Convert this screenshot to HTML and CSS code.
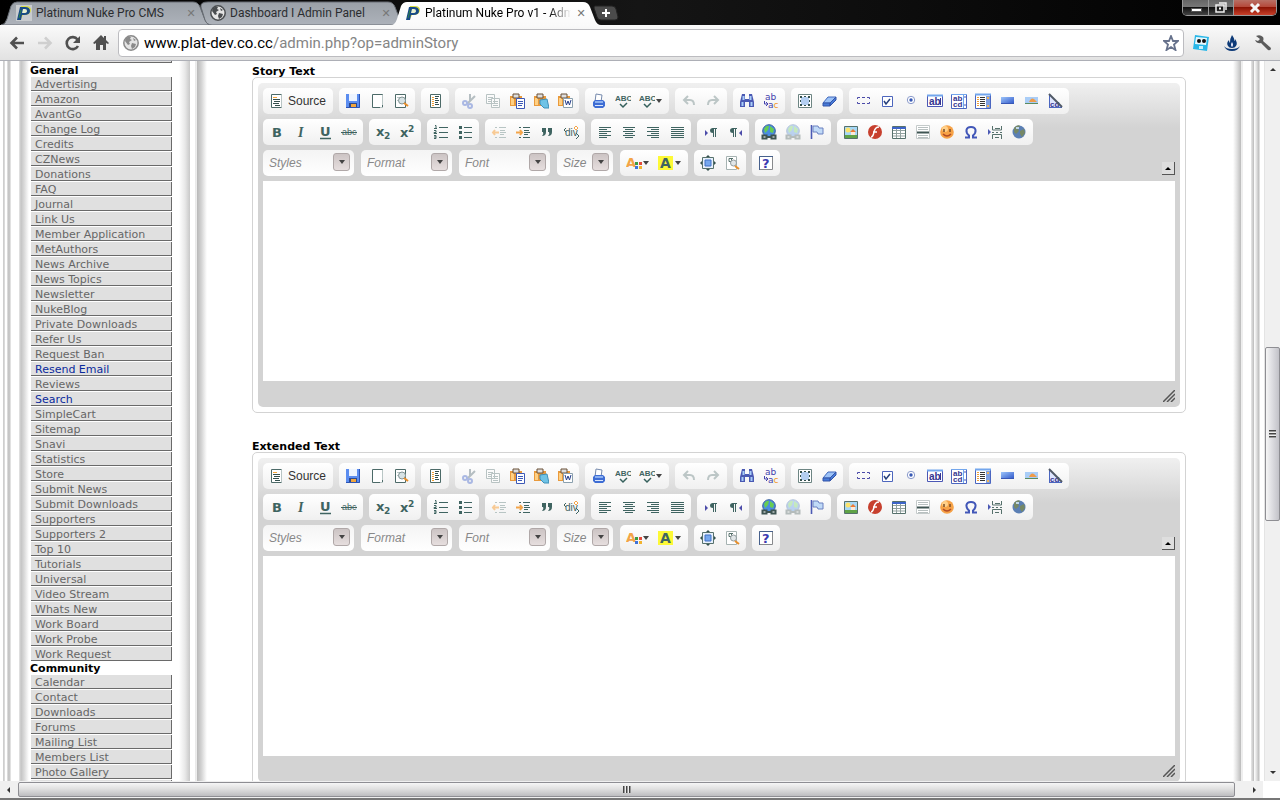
FILE: index.html
```html
<!DOCTYPE html>
<html lang="en">
<head>
<meta charset="utf-8">
<title>Platinum Nuke Pro v1 - Administration</title>
<link rel="stylesheet" href="styles.css">
</head>
<body>
<svg class="defs" aria-hidden="true">
  <defs>
    <linearGradient id="tabIdle" x2="0" y2="1"><stop offset="0" stop-color="#9aa0a7"/><stop offset="1" stop-color="#adb2ba"/></linearGradient>
    <linearGradient id="tabOn" x2="0" y2="1"><stop offset="0" stop-color="#fff"/><stop offset="1" stop-color="#fafafa"/></linearGradient>
    <linearGradient id="blueBtn" x2="1" y2="1"><stop offset="0" stop-color="#9cc4fa"/><stop offset="1" stop-color="#2d55c8"/></linearGradient>
  </defs>
  <symbol id="nuke" viewBox="0 0 16 16"><path d="M5 1h5q5 0 5 4t-5 5H7l-2 4H3z" fill="#d7dc45"/><path d="M4 2h5q5 0 5 4t-6 4H6l-1 5H1z" fill="#174a86"/><path d="M7 4h2q2 0 2 2t-3 2H6z" fill="#e8efcf"/><path d="M5 5 3 13" stroke="#2c8049"/></symbol>
  <symbol id="globe" viewBox="0 0 16 16"><circle cx="8" cy="8" r="7.200" fill="#e4e4e4" stroke="currentColor" stroke-width="1.500"/><path d="M3 3q3-2 5-1l-1 2 2 1-3 2 1 2-2 1-3-4zM9 8l4 1-1 3-3 2-1-3zM10 3l3 2-2 1z" fill="currentColor"/></symbol>
  <symbol id="back" viewBox="0 0 16 16"><path d="M8 2.500 2.500 8 8 13.500M3 8h12" fill="none" stroke="currentColor" stroke-width="2.600"/></symbol>
  <symbol id="forward" viewBox="0 0 16 16"><path d="M8 2.500 13.500 8 8 13.500M13 8H1" fill="none" stroke="currentColor" stroke-width="2.600"/></symbol>
  <symbol id="reload" viewBox="0 0 16 16"><path d="M12.500 4.500A6 6 0 1 0 13 11" fill="none" stroke="currentColor" stroke-width="2.600"/><path d="M15 1v7H8z" fill="currentColor"/></symbol>
  <symbol id="home" viewBox="0 0 16 16"><path d="M8 0 0 8l1.500 1L3 8v7h4v-5h3v5h3V8l2 1 1-1-3-3V1h-2v2z" fill="currentColor"/></symbol>
  <symbol id="star" viewBox="0 0 16 16"><path d="m8 1 2 5h5l-4 3.500 1.500 5.500L8 12l-4.500 3L5 9.500 1 6h5z" fill="#fff" stroke="#67728c" stroke-width="1.800"/></symbol>
  <symbol id="robot" viewBox="0 0 16 16"><path d="M2 0 16 2l-2 14-14-2z" fill="#28b7e8"/><path d="m3 2 11 1-1 7-11-1z" fill="#e8f8fd"/><circle cx="6" cy="6" r="2" fill="#111"/><circle cx="11" cy="6" r="2" fill="#111"/><path d="M6 11h4v3H6z" fill="#c9f0fc"/></symbol>
  <symbol id="flame" viewBox="0 0 16 16"><path d="M8 0q3 4 2 6 1 0 1-2 3 4 1 7-1 2-4 2t-4-2q-2-3 1-6 0 2 1 3 0-5 2-8z" fill="#0d3a78"/><path d="M8 7q-2 3 0 5 2-2 0-5z" fill="#eef"/><path d="M0 11q2 3 8 3t8-3q-2 5-8 5t-8-5z" fill="#0d3a78"/></symbol>
  <symbol id="wrench" viewBox="0 0 16 16"><path d="M1 1q4-2 7 1 1 2 0 4l8 7q0 3-3 2L6 8Q2 9 0 5l3 1 2-2z" fill="#5c5c5c"/></symbol>
  <symbol id="caret" viewBox="0 0 8 4"><path d="M1 0h6L4 4z" fill="#444"/></symbol>
</svg>

<template id="icons"><svg>
  <symbol id="i-source"><path d="M2.500 1.500h10v13h-10z" fill="#fff" stroke="#4c6a68"/><path d="M12.500 1.500v13" stroke="#b8c4c4"/><path d="M4 4.500h4" stroke="#f5a63a"/><path d="M4 6.500h7M5 8.500h6M4 10.500h6M6 12.500h5" stroke="#35504e"/></symbol>
  <symbol id="i-save"><path d="M1 1h14v14H1z" fill="#5b8df0"/><path d="M4 1h8v7H4z" fill="#edf4ff"/><path d="M4 10h8v5H4z" fill="#2d4a8f"/><path d="M6 11h5v4H6z" fill="#f1a63e"/><path d="M14.500 1v13.500H1" fill="none" stroke="#2c54b4"/></symbol>
  <symbol id="i-page"><path d="M3.500 1.500h10v13h-10z" fill="#fff" stroke="#4c6a68"/><path d="M13.500 2v10M14 14.500h-3" stroke="#b9c6c5" fill="none"/></symbol>
  <symbol id="i-preview"><path d="M2.500 1.500h10v13h-10z" fill="#fff" stroke="#4c6a68"/><path d="M4 4.500h4M4 7.500h2" stroke="#b9c6c5"/><circle cx="9" cy="7.500" r="3.500" fill="#d7e2e4" stroke="#819293"/><path d="m11 10 4 3" stroke="#e98f2b" stroke-width="2"/></symbol>
  <symbol id="i-template"><path d="M3.500 1.500h10v13h-10z" fill="#fff" stroke="#4c6a68"/><path d="M5 4.500h2M5 6.500h2M5 8.500h2M5 10.500h2M5 12.500h2" stroke="#f2a036"/><path d="M8 3.500h4M8 5.500h3M8 7.500h4M8 9.500h3M8 11.500h4" stroke="#35504e"/></symbol>
  <symbol id="i-cut"><path d="M9 1v7M14 3 6 11" stroke="#b5bec2" stroke-width="2"/><circle cx="4" cy="10" r="2" fill="none" stroke="#aab8e3" stroke-width="2"/><circle cx="9" cy="13" r="2" fill="none" stroke="#aab8e3" stroke-width="2"/></symbol>
  <symbol id="i-copy"><path d="M1.500 1.500h8v9h-8zM6.500 5.500h8v9h-8z" fill="#fbfbfb" stroke="#b8c3c3"/><path d="M3 4.500h5M3 6.500h3M3 8.500h3M8 8.500h5M8 10.500h5M8 12.500h5" stroke="#b8c3c3"/></symbol>
  <symbol id="i-paste"><path d="M1 3h12v10H1z" fill="#e99a3c"/><path d="M2 5h3v7H2z" fill="#ffd083"/><path d="M4 1h6v4H4z" fill="#dedede" stroke="#6a5037"/><path d="M7.500 5.500h8v10h-8z" fill="#fff" stroke="#3d59b6"/><path d="M9 8.500h5M9 10.500h5M9 12.500h4" stroke="#3d59b6"/></symbol>
  <symbol id="i-pastetext"><path d="M1 3h12v10H1z" fill="#e99a3c"/><path d="M2 5h3v7H2z" fill="#ffd083"/><path d="M4 1h6v4H4z" fill="#dedede" stroke="#6a5037"/><path d="m7 7 7-1 2 9h-5l-4-4z" fill="#6fc3e6" stroke="#3f8fb8"/></symbol>
  <symbol id="i-pasteword"><path d="M1 3h12v10H1z" fill="#e99a3c"/><path d="M2 5h3v7H2z" fill="#ffd083"/><path d="M4 1h6v4H4z" fill="#dedede" stroke="#6a5037"/><path d="M6.500 5.500h9v9h-9z" fill="#fff" stroke="#8ba0ae"/><path d="m8 7 1.500 5L11 8l1.500 4L14 7" fill="none" stroke="#27408c"/></symbol>
  <symbol id="i-print"><path d="m5 1 6 1-1 7H4z" fill="#fff" stroke="#768aad"/><path d="M4 7h8l2 2v4l-2 2H4l-2-2V9z" fill="#3e6dd4"/><path d="M4 8h8v2H4z" fill="#8bb0f0"/><path d="M4 12.500h8" stroke="#dbe7fb"/></symbol>
  <symbol id="i-spell"><text x="0" y="8" font-size="8" class="glyph bold">ABC</text><path d="m5 11 3 3 4-4" fill="none" stroke="#35605c" stroke-width="1.500"/></symbol>
  <symbol id="i-undo"><path d="M3 7h6q4 0 4 5M7 3 3 7l4 4" fill="none" stroke="#bcc6c6" stroke-width="2"/></symbol>
  <symbol id="i-redo"><path d="M13 7H7q-4 0-4 5M9 3l4 4-4 4" fill="none" stroke="#bcc6c6" stroke-width="2"/></symbol>
  <symbol id="i-find"><path d="M3 1h3v5h4V1h3l2 8v5h-5V9H6v5H1V9z" fill="#4a59b3"/><path d="M4.500 3v4M11.500 3v4M3.500 9v4M12.500 9v4" stroke="#a8cdf8" stroke-width="2"/></symbol>
  <symbol id="i-replace"><text x="2" y="7" font-size="9" fill="#4343ae" class="sans">ab</text><text x="5" y="15" font-size="9" fill="#4343ae" class="sans">a<tspan fill="#f2992a">c</tspan></text><path d="M1.500 8v3h3M3 9l2 2-2 2" fill="none" stroke="#4343ae"/></symbol>
  <symbol id="i-select"><path d="M1.500 1.500h13v13h-13z" fill="#fff" stroke="#6d8583"/><path d="M4 4h8v8H4z" fill="#b4cff2"/><path d="M3 3h2v2H3zM11 3h2v2h-2zM3 11h2v2H3zM11 11h2v2h-2zM7 3h2v1H7zM7 12h2v1H7zM3 7h1v2H3zM12 7h1v2h-1z" fill="#35504e"/></symbol>
  <symbol id="i-eraser"><path d="m7 4 8 0-6 6H2z" fill="#9cc2f7" stroke="#4068bd"/><path d="M2 10h7v3H2zM9 10l6-6v3l-6 6z" fill="#477bd8" stroke="#3455a8"/></symbol>
  <symbol id="i-form"><path d="M2.500 6V4.500H5M7 4.500h3M12 4.500h2.500V6M14.500 9v1.500H12M10 10.500H7M5 10.500H2.500V9" fill="none" stroke="#4b4ba9"/></symbol>
  <symbol id="i-check"><path d="M3.500 3.500h10v10h-10z" fill="#fff" stroke="#4d66bd"/><path d="m5 8 2 3 4-5" fill="none" stroke="#27407c" stroke-width="1.500"/></symbol>
  <symbol id="i-radio"><circle cx="8" cy="7" r="3.700" fill="#fff" stroke="#8a9acb"/><circle cx="8" cy="7" r="1.700" fill="#3759b5"/></symbol>
  <symbol id="i-field"><path d="M.5 2.500h15v11H.5z" fill="#fff" stroke="#4b57b5"/><path d="M0 2.500h16" stroke="#73a6ed" stroke-width="2"/><text x="2" y="12" font-size="10" fill="#35358f" class="bold">ab</text><path d="M13.500 5v7" stroke="#35358f"/></symbol>
  <symbol id="i-area"><path d="M.5 1.500h15v14H.5z" fill="#fff" stroke="#4b66c0"/><path d="M0 1.500h16M12.500 2v13" stroke="#73a6ed"/><text x="2" y="8" font-size="8" fill="#35358f" class="bold">ab</text><text x="2" y="14" font-size="8" fill="#35358f" class="bold">cd</text><path d="M13 4h2M13 12h2" stroke="#4b57b5"/></symbol>
  <symbol id="i-list"><path d="M.5 1.500h15v14H.5z" fill="#fff" stroke="#4b66c0"/><path d="M0 1.500h16" stroke="#73a6ed" stroke-width="2"/><path d="M2 4.500h2M2 6.500h2M2 8.500h2M2 10.500h2M2 12.500h2" stroke="#ed9d37"/><path d="M5 4.500h5M5 6.500h5M5 8.500h5M5 10.500h5M5 12.500h5" stroke="#333"/><path d="M11 3h4v12h-4z" fill="#7f9fe0"/><path d="M12 4h2v2h-2zM12 12h2v2h-2z" fill="#edb35c"/></symbol>
  <symbol id="i-button"><path d="M2 4h13v7H2z" fill="url(#blueBtn)"/><path d="M2 10.500h13" stroke="#3857b5"/></symbol>
  <symbol id="i-imgbtn"><path d="M2 4h13v7H2z" fill="#a9cdf7"/><path d="M6 9q2-5 5-3l3 3z" fill="#ef9b49"/><path d="M2 10.500h13" stroke="#5b8c5f"/></symbol>
  <symbol id="i-hidden"><path d="M2 2v13h13z" fill="#dfe6ff"/><text x="3" y="14" font-size="8" fill="#35358f" class="bold">cd</text><path d="M2.500 2v13M2 14.500h13" stroke="#4b66c0"/><path d="m2 1 13 13" stroke="#505967" stroke-width="2"/></symbol>

  <symbol id="i-bold"><text x="3" y="13" font-size="13" class="glyph sans bold">B</text></symbol>
  <symbol id="i-italic"><text x="5" y="13" font-size="14" class="glyph serif bold ital">I</text></symbol>
  <symbol id="i-underline"><text x="3" y="12" font-size="13" class="glyph sans bold">U</text><path d="M3 14.500h11" stroke="#3f6461" stroke-width="1.500"/></symbol>
  <symbol id="i-strike"><text x="1" y="11" font-size="9" class="glyph">abc</text><path d="M0 8.500h16" stroke="#3f6461"/></symbol>
  <symbol id="i-sub"><text x="1" y="12" font-size="13" class="glyph sans bold">x</text><text x="9" y="15" font-size="9" class="glyph sans bold">2</text></symbol>
  <symbol id="i-sup"><text x="1" y="13" font-size="13" class="glyph sans bold">x</text><text x="9" y="8" font-size="9" class="glyph sans bold">2</text></symbol>
  <symbol id="i-ol"><path d="M6 3.500h9M6 8.500h9M6 13.500h9M2 1.500h1v3M1 4.500h3M1 6.500h2v2H1v1h3M1 11.500h2v3H1M1 13h2" fill="none" stroke="#3f6461"/></symbol>
  <symbol id="i-ul"><path d="M2 2h3v3H2zM2 7h3v3H2zM2 12h3v3H2z" fill="#3f6461"/><path d="M7 3.500h8M7 8.500h8M7 13.500h8" stroke="#3f6461"/></symbol>
  <symbol id="i-outdent"><path d="M4 3.500h2M8 3.500h7M9 6.500h5M9 8.500h6M9 10.500h4M4 13.500h2M8 13.500h7" stroke="#b8c5c4"/><path d="M8 8.500H2M4 6 2 8.500 4 11" fill="none" stroke="#f8ca94" stroke-width="2"/></symbol>
  <symbol id="i-indent"><path d="M4 3.500h2M8 3.500h7M9 6.500h5M9 8.500h6M9 10.500h4M4 13.500h2M8 13.500h7" stroke="#3f6461"/><path d="M1 8.500h6M5 6l2 2.500L5 11" fill="none" stroke="#f3a54a" stroke-width="2"/></symbol>
  <symbol id="i-quote"><path d="M3 4h4v4q0 4-4 4 2-2 1-4H3zM9 4h4v4q0 4-4 4 2-2 1-4H9z" fill="#3f6461"/></symbol>
  <symbol id="i-div"><text x="2" y="12" font-size="10" class="glyph">div</text><path d="M3 4 1 6l2 2M13 9l3 3-3 3" fill="none" stroke="#3f6461"/><path d="m13 2 2 2-2 2-2-2z" fill="#fff" stroke="#f3a54a"/></symbol>
  <symbol id="i-left"><path d="M2 3.500h12M2 5.500h8M2 7.500h12M2 9.500h8M2 11.500h12M2 13.500h8" stroke="#3f6461"/></symbol>
  <symbol id="i-center"><path d="M2 3.500h12M4 5.500h8M2 7.500h12M4 9.500h8M2 11.500h12M4 13.500h8" stroke="#3f6461"/></symbol>
  <symbol id="i-right"><path d="M2 3.500h12M6 5.500h8M2 7.500h12M6 9.500h8M2 11.500h12M6 13.500h8" stroke="#3f6461"/></symbol>
  <symbol id="i-justify"><path d="M2 3.500h13M2 5.500h13M2 7.500h13M2 9.500h13M2 11.500h13M2 13.500h13" stroke="#3f6461"/></symbol>
  <symbol id="i-ltr"><path d="m2 6 3 3-3 3z" fill="#4c4ca9"/><path d="M14 4.500H9.500M10.500 4v9M12.500 4v9" fill="none" stroke="#3f6461"/><path d="M10 4v5q-3 0-3-2.500T10 4z" fill="#3f6461"/></symbol>
  <symbol id="i-rtl"><path d="m15 6-3 3 3 3z" fill="#4c4ca9"/><path d="M10 4.500H5.500M6.500 4v9M8.500 4v9" fill="none" stroke="#3f6461"/><path d="M6 4v5q-3 0-3-2.500T6 4z" fill="#3f6461"/></symbol>
  <symbol id="i-link"><circle cx="8" cy="7" r="6.300" fill="#4a8de0" stroke="#365f9e"/><path d="M3 5q2-4 5-3l-1 4-3 3zM9 2l4 3-1 4-3-1z" fill="#67cd51"/><path d="M1.500 11.500h4v3h-4zM10.500 11.500h4v3h-4zM5 13h6" fill="#fff" stroke="#3f5553" stroke-width="2"/></symbol>
  <symbol id="i-anchor"><path d="M2.500 1v14" stroke="#4c5ab4" stroke-width="1.600"/><path d="M4 2h5l1 2h4v6H9L8 8H4z" fill="#c0daf7" stroke="#6a80c0"/></symbol>
  <symbol id="i-image"><path d="M1.500 2.500h13v12h-13z" fill="#a5d8f7" stroke="#56716c"/><circle cx="5" cy="6" r="2.500" fill="#fbe36c"/><path d="M2 11h12v3H2z" fill="#5fa347"/><path d="m7 8 3-3 3 3z" fill="#ed7b35"/><path d="M8 8h4v3H8z" fill="#fbe9d6"/></symbol>
  <symbol id="i-flash"><circle cx="8" cy="8" r="7" fill="#c7402e"/><path d="M12 3q-4 0-5 5t-3 5M6 8h4" fill="none" stroke="#fff" stroke-width="1.500"/></symbol>
  <symbol id="i-table"><path d="M1.500 2.500h13v12h-13z" fill="#fff" stroke="#56716c"/><path d="M2 6.500h12M2 9.500h12M2 12h12M5.500 5v9M9.500 5v9" stroke="#92a19f"/><path d="M1 3h14v2H1z" fill="#3d64c8"/></symbol>
  <symbol id="i-rule"><path d="M1.500 1.500h13v13h-13z" fill="#fff" stroke="#c4caca"/><path d="M3 3.500h10M3 5.500h10M3 11.500h10M3 13.500h10" stroke="#b8c0c0"/><path d="M2 8.500h12" stroke="#3f5553" stroke-width="2"/></symbol>
  <symbol id="i-smile"><circle cx="8" cy="8" r="6.800" fill="#f6a247"/><circle cx="6" cy="5" r="3" fill="#ffd08a"/><path d="M5 5v3M11 5v3" stroke="#7a4d29" stroke-width="1.500"/><path d="M4 10q4 4 8 0" fill="none" stroke="#b34c26" stroke-width="1.500"/></symbol>
  <symbol id="i-omega"><path d="M2 13.500h4v-2Q3 9 3.500 6T8 3t4.500 3-2.500 5.500v2h4" fill="none" stroke="#4257b8" stroke-width="2"/></symbol>
  <symbol id="i-break"><path d="m1 5 3 3-3 3z" fill="#4c5ab4"/><path d="M5.500 2v4h9V2M5.500 15v-4.500h9V15M5 8.500h2M9 8.500h2M13 8.500h2M8 4.500h5M8 13.500h4" fill="none" stroke="#56716c"/></symbol>
  <symbol id="i-world"><circle cx="8" cy="8" r="6.500" fill="#5b7fb4"/><path d="M3 4q4-4 6-2L7 5l1 2-3 3-2-2zM9 7l4-2 1 4-3 4-2-3z" fill="#768866"/><path d="M5 4h3" stroke="#c0d7e8" stroke-width="2"/></symbol>
  <symbol id="i-color"><text x="0" y="12" font-size="13" fill="#f3a447" class="sans bold">A</text><path d="M9 7h3v3H9z" fill="#3d9c41"/><path d="M13 7h3v3h-3z" fill="#e24b3c"/><path d="M9 11h3v3H9z" fill="#3f73d8"/><path d="M13 11h3v3h-3z" fill="#f2b32e"/></symbol>
  <symbol id="i-bg"><path d="M0 1h15v14H0z" fill="#fdf936"/><text x="2" y="13" font-size="14" class="glyph sans bold">A</text></symbol>
  <symbol id="i-max"><path d="M2.500 2.500h11v11h-11z" fill="#e7f0fc" stroke="#56716c"/><path d="M5 5h6v6H5z" fill="#76a8ef" stroke="#4070c4"/><path d="M6 2h4L8 0zM6 14h4l-2 2zM2 6v4L0 8zM14 6v4l2-2z" fill="#34514e"/></symbol>
  <symbol id="i-blocks"><path d="M2.500 1.500h10v13h-10z" fill="#fff" stroke="#a6b3b2"/><path d="M9 3.500H5v3h2M7.500 3v6" stroke="#56716c" fill="none"/><circle cx="9.500" cy="8" r="3" fill="#e1e6e8" stroke="#929c9e"/><path d="m11 11 4 3" stroke="#e98f2b" stroke-width="2"/></symbol>
  <symbol id="i-about"><path d="M1.500 1.500h13v13h-13z" fill="#fff" stroke="#87898c"/><path d="M1.500 15V1.500H15" fill="none" stroke="#46608c"/><text x="4" y="13" font-size="13" fill="#3a3ab0" class="sans bold">?</text></symbol>
</svg></template>

<header class="chrome">
  <div class="strip">
    <nav class="tabs" aria-label="Tabs">
      <div class="tab">
        <svg class="shape" viewBox="0 0 210 24" preserveAspectRatio="none"><path d="M0 24Q4 24 6 18L10 5Q12 1 16 1H192Q197 1 199 6L204 19Q206 24 210 24z" fill="url(#tabIdle)" stroke="#686d74"/></svg>
        <svg class="fav boxed"><use href="#nuke"/></svg><a href="#">Platinum Nuke Pro CMS</a><button class="close" aria-label="Close tab"></button>
      </div>
      <div class="tab">
        <svg class="shape" viewBox="0 0 210 24" preserveAspectRatio="none"><path d="M16 24Q11 24 9 19L5 6Q4 1 12 1H192Q197 1 199 6L204 19Q206 24 210 24z" fill="url(#tabIdle)" stroke="#686d74"/></svg>
        <svg class="fav dark"><use href="#globe"/></svg><a href="#">Dashboard I Admin Panel</a><button class="close" aria-label="Close tab"></button>
      </div>
      <div class="tab active">
        <svg class="shape" viewBox="0 0 210 24" preserveAspectRatio="none"><path d="M0 24Q4 24 6 18L10 5Q12 1 16 1H192Q197 1 199 6L204 19Q206 24 210 24z" fill="url(#tabOn)"/></svg>
        <svg class="fav"><use href="#nuke"/></svg><a href="#">Platinum Nuke Pro v1 - Administration</a><button class="close" aria-label="Close tab"></button>
      </div>
    </nav>
    <button class="newtab" aria-label="New tab"><svg viewBox="0 0 26 16"><path d="M2 1h17q3 0 4 3l2 8q0 3-3 3H8q-3 0-4-3L1 3q0-2 1-2z" fill="#4b4b4b" stroke="#222"/><path d="M13 4v8M9 8h8" stroke="#fff" stroke-width="2"/></svg></button>
    <div class="window">
      <button aria-label="Minimize"><svg viewBox="0 0 16 12"><path d="M3.500 6.500h10v3h-10z" fill="#fff" stroke="#555"/></svg></button>
      <button aria-label="Restore"><svg viewBox="0 0 16 12"><path d="M6 1h7v7M3 3h8v7H3z" fill="none" stroke="#eee" stroke-width="1.500"/><path d="M6 5.500h2v2H6z" fill="#fff"/></svg></button>
      <button class="quit" aria-label="Close"><svg viewBox="0 0 16 12"><path d="m4 2 8 8M12 2l-8 8" stroke="#f4f4f4" stroke-width="3"/></svg></button>
    </div>
  </div>
  <div class="bar">
    <button aria-label="Back"><svg><use href="#back"/></svg></button>
    <button class="off" aria-label="Forward"><svg><use href="#forward"/></svg></button>
    <button aria-label="Reload"><svg><use href="#reload"/></svg></button>
    <button aria-label="Home"><svg><use href="#home"/></svg></button>
    <div class="omnibox">
      <svg class="site"><use href="#globe"/></svg>
      <div class="url" role="textbox" aria-label="Address" contenteditable="true" spellcheck="false">www.plat-dev.co.cc<span>/admin.php?op=adminStory</span></div>
      <button aria-label="Bookmark"><svg><use href="#star"/></svg></button>
    </div>
    <div class="extras">
      <button aria-label="Robot extension"><svg><use href="#robot"/></svg></button>
      <button aria-label="Flame extension"><svg><use href="#flame"/></svg></button>
      <button aria-label="Settings"><svg><use href="#wrench"/></svg></button>
    </div>
  </div>
</header>

<div class="view">
  <div class="page">
    <div class="edge-left"></div>
    <nav class="side" aria-label="Modules">
      <ul><li class="cut"></li></ul>
      <h2>General</h2>
      <ul>
        <li><a href="#">Advertising</a></li><li><a href="#">Amazon</a></li><li><a href="#">AvantGo</a></li><li><a href="#">Change Log</a></li><li><a href="#">Credits</a></li><li><a href="#">CZNews</a></li><li><a href="#">Donations</a></li><li><a href="#">FAQ</a></li><li><a href="#">Journal</a></li><li><a href="#">Link Us</a></li><li><a href="#">Member Application</a></li><li><a href="#">MetAuthors</a></li><li><a href="#">News Archive</a></li><li><a href="#">News Topics</a></li><li><a href="#">Newsletter</a></li><li><a href="#">NukeBlog</a></li><li><a href="#">Private Downloads</a></li><li><a href="#">Refer Us</a></li><li><a href="#">Request Ban</a></li><li><a class="new" href="#">Resend Email</a></li><li><a href="#">Reviews</a></li><li><a class="new" href="#">Search</a></li><li><a href="#">SimpleCart</a></li><li><a href="#">Sitemap</a></li><li><a href="#">Snavi</a></li><li><a href="#">Statistics</a></li><li><a href="#">Store</a></li><li><a href="#">Submit News</a></li><li><a href="#">Submit Downloads</a></li><li><a href="#">Supporters</a></li><li><a href="#">Supporters 2</a></li><li><a href="#">Top 10</a></li><li><a href="#">Tutorials</a></li><li><a href="#">Universal</a></li><li><a href="#">Video Stream</a></li><li><a href="#">Whats New</a></li><li><a href="#">Work Board</a></li><li><a href="#">Work Probe</a></li><li><a href="#">Work Request</a></li>
      </ul>
      <h2>Community</h2>
      <ul>
        <li><a href="#">Calendar</a></li><li><a href="#">Contact</a></li><li><a href="#">Downloads</a></li><li><a href="#">Forums</a></li><li><a href="#">Mailing List</a></li><li><a href="#">Members List</a></li><li><a href="#">Photo Gallery</a></li><li class="cut"></li>
      </ul>
    </nav>
    <div class="edge-mid"></div>
    <main>
      <section>
        <label for="story">Story Text</label>
        <div class="editor"><div class="skin"><div class="tools"></div><textarea id="story"></textarea><div class="foot"></div></div></div>
      </section>
      <section>
        <label for="extended">Extended Text</label>
        <div class="editor"><div class="skin"><div class="tools"></div><textarea id="extended"></textarea><div class="foot"></div></div></div>
      </section>
    </main>
    <div class="edge-right"></div>
  </div>
  <div class="vscroll">
    <svg viewBox="0 0 16 16"><path d="m5 10 3-3 3 3z" fill="#333"/></svg>
    <div class="track"><div class="thumb"></div></div>
    <svg viewBox="0 0 16 16"><path d="m5 6 3 3 3-3z" fill="#333"/></svg>
  </div>
</div>
<div class="hscroll">
  <svg viewBox="0 0 16 16"><path d="m10 5-3 3 3 3z" fill="#333"/></svg>
  <div class="thumb"></div>
  <svg viewBox="0 0 16 16"><path d="m6 5 3 3-3 3z" fill="#333"/></svg>
</div>
<script src="app.js"></script>
</body>
</html>
```
FILE: app.js
```js
const rows = [
  ["source", "save page preview", "template", "cut copy paste pastetext pasteword", "print spell spell+", "undo redo", "find replace", "select eraser", "form check radio field area list button imgbtn hidden"],
  ["bold italic underline strike", "sub sup", "ol ul", "outdent indent quote div", "left center right justify", "ltr rtl", "link link- anchor", "image flash table rule smile omega break world"],
  ["@Styles", "@Format", "@Font", "@Size", "color+ bg+", "max blocks", "about"]
];
const icons = document.getElementById("icons").content;

function tool(token) {
  const name = token.replace(/[+-]/g, "");
  const caret = token.endsWith("+") ? '<svg class="caret"><use href="#caret"/></svg>' : "";
  const off = token.endsWith("-") ? " faded" : "";
  const text = name === "source" ? "Source" : "";
  const art = icons.querySelector(`#i-${name}`).innerHTML;
  return `<button type="button" class="tool ${name}${off}" aria-label="${name}"><svg class="icon" viewBox="0 0 16 16">${art}</svg>${text}${caret}</button>`;
}

function group(spec) {
  if (spec[0] === "@") {
    const name = spec.slice(1);
    return `<div class="combo ${name.toLowerCase()}"><select aria-label="${name}"><option>${name}</option></select><span><svg><use href="#caret"/></svg></span></div>`;
  }
  return `<div class="group">${spec.split(" ").map(tool).join("")}</div>`;
}

const collapse = '<button type="button" class="collapse" aria-label="Collapse toolbar"><svg viewBox="0 0 8 4"><path d="M1 4h6L4 1z"/></svg></button>';
const grip = '<svg viewBox="0 0 12 12"><path d="M0 12 12 0M4 12l8-8M8 12l4-4" fill="none" stroke="#555" stroke-width="1.500"/></svg>';

document.querySelectorAll(".tools").forEach(el => {
  el.innerHTML = rows.map((r, i) => `<div class="row">${r.map(group).join("")}${i === 2 ? collapse : ""}</div>`).join("");
});
document.querySelectorAll(".foot").forEach(el => { el.innerHTML = grip; });
```
FILE: styles.css
```css
* { box-sizing: border-box; }
html, body { height: 100%; margin: 0; }
body {
  display: flex;
  flex-direction: column;
  overflow: hidden;
  background: #fff;
  font: 11px/14px "DejaVu Sans", Verdana, sans-serif;
}
button { padding: 0; border: 0; background: none; font: inherit; color: inherit; }
svg { display: block; }
.defs { position: absolute; width: 0; height: 0; }
a { color: inherit; text-decoration: none; }

.chrome { flex: none; font-family: Roboto, "Open Sans", sans-serif; }
.strip { display: flex; height: 25px; background: linear-gradient(90deg, #000, #151515 50%, #000); }
.tabs { display: flex; padding: 1px 0 0 1px; }
.tab {
  position: relative;
  display: flex;
  align-items: center;
  width: 210px;
  height: 24px;
  padding: 0 14px 0 15px;
  color: #2b2d30;
  font-size: 12px;
  line-height: 16px;
}
.tab + .tab { margin-left: -15px; }
.tab + .tab .fav { margin-left: -1px; }
.tab.active { z-index: 1; color: #000; }
.shape { position: absolute; inset: 0; width: 100%; height: 100%; }
.fav { position: relative; flex: none; width: 16px; height: 16px; margin-right: 4px; }
.fav.boxed { background: #c9cccf; }
.fav.dark { color: #4a4d50; }
.tab a { position: relative; flex: 1; overflow: hidden; white-space: nowrap; }
.tab.active a { -webkit-mask-image: linear-gradient(90deg, #000 85%, transparent); mask-image: linear-gradient(90deg, #000 85%, transparent); }
.close { position: relative; width: 12px; height: 16px; margin-left: 4px; color: #777; }
.close::before { content: "✕"; font: 11px/16px "DejaVu Sans", sans-serif; }
.newtab { align-self: center; margin-left: -8px; z-index: 1; }
.newtab svg { width: 26px; height: 16px; }
.window {
  display: flex;
  height: 16px;
  margin: 0 3px 0 auto;
  border: 1px solid #999;
  border-top: 0;
  border-radius: 0 0 5px 5px;
  overflow: hidden;
}
.window button { width: 25px; display: grid; place-items: center; background: linear-gradient(#666, #777 45%, #111 50%, #444); }
.window button + button { border-left: 1px solid #999; }
.window .quit { width: 43px; background: linear-gradient(#b87065, #b5493a 45%, #8c1404 50%, #c8402a); }
.window svg { width: 16px; height: 12px; }

.bar {
  display: flex;
  align-items: center;
  height: 36px;
  padding: 0 9px 0 3px;
  background: linear-gradient(#fafafa, #e2e2e2);
  border-bottom: 1px solid #adafb6;
  color: #505050;
}
.bar > button { width: 28px; display: grid; place-items: center; }
.bar svg { width: 16px; height: 16px; }
.bar .off { color: #cfcfcf; }
.omnibox {
  display: flex;
  align-items: center;
  flex: 1;
  height: 28px;
  margin: 0 9px 0 3px;
  padding: 0 4px;
  background: #fff;
  border: 1px solid #bcbcc0;
  border-radius: 4px;
}
.site { color: #8a8a8a; }
.url { flex: 1; margin-left: 5px; color: #000; font-size: 15px; line-height: 24px; white-space: nowrap; outline: 0; }
.url span { color: #858585; }
.extras { display: flex; gap: 15px; }

.view { flex: 1; min-height: 0; display: flex; }
.page { flex: 1; min-width: 0; display: flex; overflow: hidden; }
.edge-left {
  flex: none;
  width: 30px;
  background: linear-gradient(90deg, #fff 3px, #c8c8c8 3px, #e0e0e0 5px, #fff 5px, #fff 7px, #e5e5e5 7px, #bbb 9px, #eee 11px, #fff 11px, #fff 19px, #e8e8e8 19px, #c4c4c4 21px, #d8d8d8 24px, #fff 29px);
}
.edge-mid {
  flex: none;
  width: 36px;
  background: linear-gradient(90deg, #fff 7px, #e8e8e8 13px, #c8c8c8 18px, #fff 18px, #fff 23px, #e8e8e8 23px, #eee 25px, #b8b8b8 25px, #d0d0d0 29px, #fff 35px);
}
.edge-right {
  flex: none;
  width: 31px;
  background: linear-gradient(90deg, #fff, #e0e0e0 4px, #bbb 8px, #eee 8px, #eee 10px, #fff 10px, #fff 18px, #e8e8e8 18px, #bbb 21px, #fff 21px, #e8e8e8 23px, #bbb 26px, #fff 27px);
}
.side { flex: none; width: 142px; }
.side h2 { height: 14px; margin: 0; font: bold 11px/16px "DejaVu Sans", Verdana, sans-serif; color: #000; }
.side ul { display: grid; gap: 1px; margin: 0; padding: 0 0 0 1px; list-style: none; }
.side li {
  height: 14px;
  padding-left: 4px;
  line-height: 16px;
  background: #e0e0e0;
  border: solid #6a6a6a;
  border-width: 0 1px 1px 0;
  color: #666;
}
.side li.cut { height: 2px; }
.side .new { color: #0a2a9c; }

main { flex: 1; min-width: 0; padding: 2px 47px 0 44px; }
section { margin-bottom: 25px; }
section label { display: block; height: 14px; line-height: 18px; font-weight: bold; color: #000; }
.editor { padding: 5px; border: 1px solid #d3d3d3; border-radius: 5px; }
.skin { padding: 5px 5px 0; background: #d3d3d3 linear-gradient(#f0f0f0, #d3d3d3) 0 0 / 100% 45px no-repeat; border-radius: 5px; }
.tools { display: grid; gap: 5px; margin-bottom: 5px; }
.row { display: flex; gap: 6px; height: 26px; }
.group { display: flex; padding: 0 2px; border-radius: 5px; background: linear-gradient(#fff, #f0f0f0); }
.tool { display: flex; align-items: center; padding: 0 4px; color: #333; font: 12px/16px "Liberation Sans", Arial, sans-serif; }
.tool.source { gap: 3px; width: 66px; }
.icon { width: 16px; height: 16px; font-family: "Liberation Sans", Arial, sans-serif; }
.faded { opacity: 0.35; }
.caret { width: 8px; height: 4px; }
.glyph { fill: #3f6461; }
.sans { font-family: "DejaVu Sans", sans-serif; }
.serif { font-family: "Liberation Serif", serif; }
.bold { font-weight: bold; }
.ital { font-style: italic; }
.combo { position: relative; width: 91px; margin-right: 1px; }
.combo.size { width: 56px; }
.combo select {
  appearance: none;
  width: 100%;
  height: 26px;
  padding: 0 18px 0 6px;
  border: 0;
  border-radius: 5px;
  background: linear-gradient(#f4f4f4, #fff);
  color: #888;
  font: italic 12px/24px "Liberation Sans", Arial, sans-serif;
}
.combo span {
  position: absolute;
  top: 3px;
  right: 4px;
  display: grid;
  place-items: center;
  width: 17px;
  height: 18px;
  border: 1px solid #b0a8a8;
  border-radius: 3px;
  background: linear-gradient(#ccc4c4, #e6dede);
  pointer-events: none;
}
.combo span svg { width: 8px; height: 4px; }
.collapse { align-self: flex-end; width: 13px; height: 13px; margin: 0 0 1px auto; border: solid #555; border-width: 0 1px 1px 0; background: #dedede; }
.collapse svg { width: 8px; height: 4px; margin: auto; }
textarea { display: block; width: 100%; height: 200px; border: 0; padding: 8px; resize: none; background: #fff; }
.foot { display: flex; justify-content: flex-end; align-items: center; height: 26px; padding-top: 4px; }
.foot svg { width: 12px; height: 12px; }

.vscroll { flex: none; width: 16px; display: flex; flex-direction: column; background: #f0f0f0; border-left: 1px solid #e4e4e4; }
.vscroll svg, .hscroll svg { flex: none; width: 16px; height: 16px; }
.track { flex: 1; padding: 0; display: flex; flex-direction: column; }
.track::before { content: ""; flex: 271; }
.track::after { content: ""; flex: 245; }
.thumb { border: 1px solid #8e8e93; border-radius: 2px; }
.track .thumb { flex: 172; display: grid; place-items: center; background: linear-gradient(90deg, #f6f6f6, #dedee2 45%, #c2c2c8); }
.track .thumb::before { content: ""; width: 7px; height: 8px; background: repeating-linear-gradient(#444 0 1px, #999 1px 2px, #eee 2px 3px); }
.hscroll { flex: none; display: flex; align-items: center; height: 19px; padding-right: 17px; gap: 2px; background: linear-gradient(90deg, #f0f0f0 calc(100% - 17px), #fff 0); border-bottom: 2px solid #777; }
.hscroll .thumb { flex: 1; height: 15px; display: grid; place-items: center; background: linear-gradient(#f6f6f6, #e0e0e0 45%, #bdbdc0); }
.hscroll .thumb::before { content: ""; width: 8px; height: 7px; background: repeating-linear-gradient(90deg, #444 0 1px, #999 1px 2px, #eee 2px 3px); }
.hscroll svg:last-child { margin: 0 0 0 10px; }
```
